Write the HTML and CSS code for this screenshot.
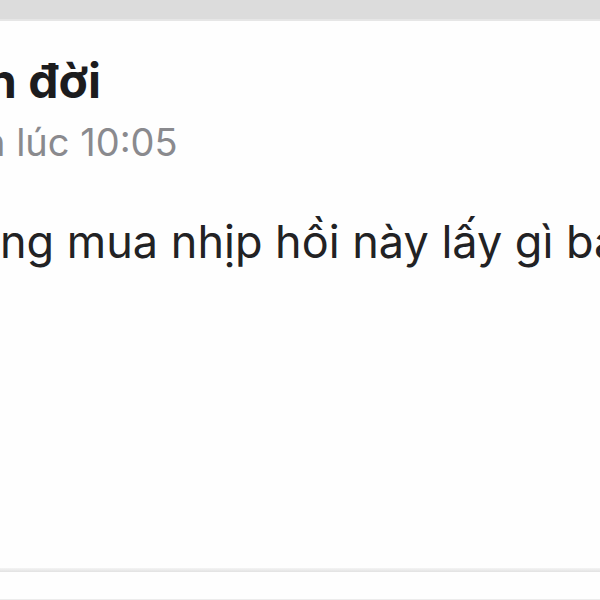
FILE: index.html
```html
<!DOCTYPE html>
<html lang="vi">
<head>
    <meta charset="UTF-8">
    <meta name="viewport" content="width=device-width, initial-scale=1.0">
    <title>Bài viết</title>
    <link rel="stylesheet" href="styles.css">
</head>
<body>
    <div class="topbar"></div>
    <div class="post">
        <div class="post-head">
            <div class="author">n đời</div>
            <div class="time">n lúc 10:05</div>
        </div>
        <p class="content">ng mua nhịp hồi này lấy gì bao giờ về bờ</p>
    </div>
    <div class="divider"></div>
    <div class="next-card"></div>
</body>
</html>
```

FILE: styles.css
```css
html, body {
    margin: 0;
    padding: 0;
}
body {
    width: 600px;
    height: 600px;
    overflow: hidden;
    background: #fefefe;
    font-family: Inter, "Noto Sans", sans-serif;
    color: #1c1c1e;
}
.topbar {
    height: 19px;
    background: #dcdcdc;
    border-bottom: 2px solid #e6e6e6;
}
.post {
    height: 547px;
    padding-top: 32px;
    box-sizing: border-box;
    overflow: hidden;
    white-space: nowrap;
}
.post-head {
    display: flex;
    flex-direction: column;
    gap: 10px;
}
.author {
    font-size: 48px;
    font-weight: 700;
    line-height: 56px;
    margin-left: -13px;
}
.time {
    font-size: 38px;
    line-height: 46px;
    color: #8a8a8e;
    margin-left: -17px;
}
.content {
    margin: 50px 0 0 0;
    font-size: 45px;
    line-height: 54px;
    color: #222224;
}
.divider {
    height: 4px;
    background: linear-gradient(#f4f4f4, #e2e2e2);
}
.next-card {
    height: 27px;
    background: #fefefe;
    border-bottom: 1px solid #ececec;
}
```
